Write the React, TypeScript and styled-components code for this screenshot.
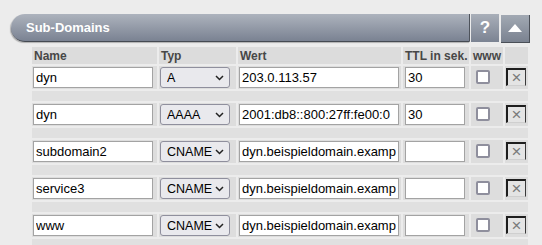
import styled, { createGlobalStyle } from 'styled-components';

const GlobalStyle = createGlobalStyle`
  body {
    margin: 0;
    background: #ececec;
    font-family: "Liberation Sans", Arial, sans-serif;
  }
`;

type DnsRecord = {
    name: string;
    type: string;
    value: string;
    ttl: string;
};

const records: DnsRecord[] = [
    { name: 'dyn', type: 'A', value: '203.0.113.57', ttl: '30' },
    { name: 'dyn', type: 'AAAA', value: '2001:db8::800:27ff:fe00:0', ttl: '30' },
    { name: 'subdomain2', type: 'CNAME', value: 'dyn.beispieldomain.example.com', ttl: '' },
    { name: 'service3', type: 'CNAME', value: 'dyn.beispieldomain.example.com', ttl: '' },
    { name: 'www', type: 'CNAME', value: 'dyn.beispieldomain.example.com', ttl: '' },
];

const types = ['A', 'AAAA', 'CNAME', 'MX', 'TXT'];

const App = () => {
    return (
        <>
            <GlobalStyle />
            <Panel>
                <Header>
                    <TitleBar>Sub-Domains</TitleBar>
                    <HelpButton>?</HelpButton>
                    <CollapseButton>
                        <svg width='14' height='8' viewBox='0 0 14 8'>
                            <polygon points='0,8 7,0 14,8' fill='#fff' />
                        </svg>
                    </CollapseButton>
                </Header>
                <TableWrap>
                    <Table>
                        <thead>
                            <tr>
                                <Th $w={125}>Name</Th>
                                <Th $w={77}>Typ</Th>
                                <Th $w={163}>Wert</Th>
                                <Th $w={66}>TTL in sek.</Th>
                                <Th $w={32}>www</Th>
                                <Th $w={23}></Th>
                            </tr>
                        </thead>
                        <tbody>
                            {records.map((rec, i) => (
                                <Record key={i} rec={rec} />
                            ))}
                        </tbody>
                    </Table>
                </TableWrap>
            </Panel>
        </>
    );
};

const Record = ({ rec }: { rec: DnsRecord }) => (
    <>
        <tr>
            <Td>
                <TextInput $w={120} defaultValue={rec.name} />
            </Td>
            <Td>
                <SelectWrap>
                    <TypeSelect defaultValue={rec.type}>
                        {types.map((t) => (
                            <option key={t}>{t}</option>
                        ))}
                    </TypeSelect>
                    <Chevron width='9' height='6' viewBox='0 0 9 6'>
                        <polyline
                            points='1,1 4.5,4.5 8,1'
                            fill='none'
                            stroke='#222'
                            strokeWidth='1.5'
                        />
                    </Chevron>
                </SelectWrap>
            </Td>
            <Td>
                <TextInput $w={160} defaultValue={rec.value} />
            </Td>
            <Td $pl={2}>
                <TextInput $w={60} defaultValue={rec.ttl} />
            </Td>
            <Td>
                <Check type='checkbox' />
            </Td>
            <Td>
                <DeleteButton>×</DeleteButton>
            </Td>
        </tr>
        <tr>
            <SepCell colSpan={6} />
        </tr>
    </>
);

const Panel = styled.div`
    padding: 14px 0 0 11px;
    width: 519px;
`;

const Header = styled.div`
    display: flex;
    align-items: flex-start;
    height: 29px;
`;

const TitleBar = styled.div`
    flex: 1;
    height: 27px;
    display: flex;
    align-items: center;
    padding-left: 15px;
    margin-right: 1px;
    border-radius: 14px 0 0 14px;
    background: linear-gradient(#adb3bd, #7a8292);
    border-bottom: 1px solid #454a52;
    border-right: 1px solid #4e535b;
    box-shadow: -1px 1px 1px rgba(0, 0, 0, 0.25);
    color: #fff;
    font-size: 13px;
    font-weight: bold;
`;

const HelpButton = styled.div`
    width: 28px;
    height: 28px;
    margin-right: 2px;
    display: flex;
    align-items: center;
    justify-content: center;
    background: linear-gradient(#a9afb9, #7b8392);
    color: #fff;
    font-size: 17px;
    font-weight: bold;
`;

const CollapseButton = styled.div`
    width: 28px;
    height: 27px;
    margin-top: 1px;
    display: flex;
    align-items: center;
    justify-content: center;
    background: linear-gradient(#a2a9b3, #7a8290);
    border-right: 1px solid #4a4f57;
    border-bottom: 1px solid #4a4f57;
    svg {
        margin-top: -1px;
    }
`;

const TableWrap = styled.div`
    margin: 2px 0 0 19px;
`;

const Table = styled.table`
    border-collapse: separate;
    border-spacing: 2px;
    table-layout: fixed;
`;

const Th = styled.th<{ $w: number }>`
    width: ${(p) => p.$w}px;
    height: 17px;
    padding: 0 0 0 2px;
    box-sizing: border-box;
    background: #dcdcdc;
    color: #474747;
    font-size: 12px;
    font-weight: bold;
    text-align: left;
    white-space: nowrap;
`;

const Td = styled.td<{ $pl?: number }>`
    height: 23px;
    box-sizing: border-box;
    padding: 1px 0 1px ${(p) => p.$pl ?? 1}px;
    background: #dddddd;
    vertical-align: top;
    line-height: 0;
`;

const SepCell = styled.td`
    height: 10px;
    box-sizing: border-box;
    padding: 0;
    background: #e0e0e0;
    line-height: 0;
`;

const TextInput = styled.input<{ $w: number }>`
    display: block;
    width: ${(p) => p.$w}px;
    height: 21px;
    box-sizing: border-box;
    margin: 0;
    padding: 0 2px;
    border: 1px solid #a3a3a3;
    background: #fff;
    font-family: "Liberation Sans", Arial, sans-serif;
    font-size: 13px;
    color: #000;
    outline: none;
`;

const SelectWrap = styled.div`
    position: relative;
    width: 70px;
`;

const TypeSelect = styled.select`
    appearance: none;
    display: block;
    width: 70px;
    height: 21px;
    box-sizing: border-box;
    margin: 0;
    padding: 0 0 0 6px;
    border: 1px solid #8f8f9d;
    border-radius: 3px;
    background: #e9e9ed;
    font-family: "Liberation Sans", Arial, sans-serif;
    font-size: 12.5px;
    color: #000;
    outline: none;
`;

const Chevron = styled.svg`
    position: absolute;
    right: 6px;
    top: 8px;
    pointer-events: none;
`;

const Check = styled.input`
    appearance: none;
    display: block;
    width: 14px;
    height: 14px;
    margin: 3px 0 0 4px;
    border: 2px solid #8f8f9d;
    border-radius: 2px;
    background: #fff;
`;

const DeleteButton = styled.button`
    display: block;
    width: 20px;
    height: 18px;
    margin: 1px 0 0 0;
    padding: 0;
    box-sizing: border-box;
    border-style: solid;
    border-width: 2px 1px 1px 2px;
    border-color: #1e1e1e #3a3a3a #cfcfcf #1e1e1e;
    background: #e4e4e4;
    color: #7a7a7a;
    font-family: "Liberation Sans", Arial, sans-serif;
    font-size: 17px;
    line-height: 14px;
`;

export default App;
